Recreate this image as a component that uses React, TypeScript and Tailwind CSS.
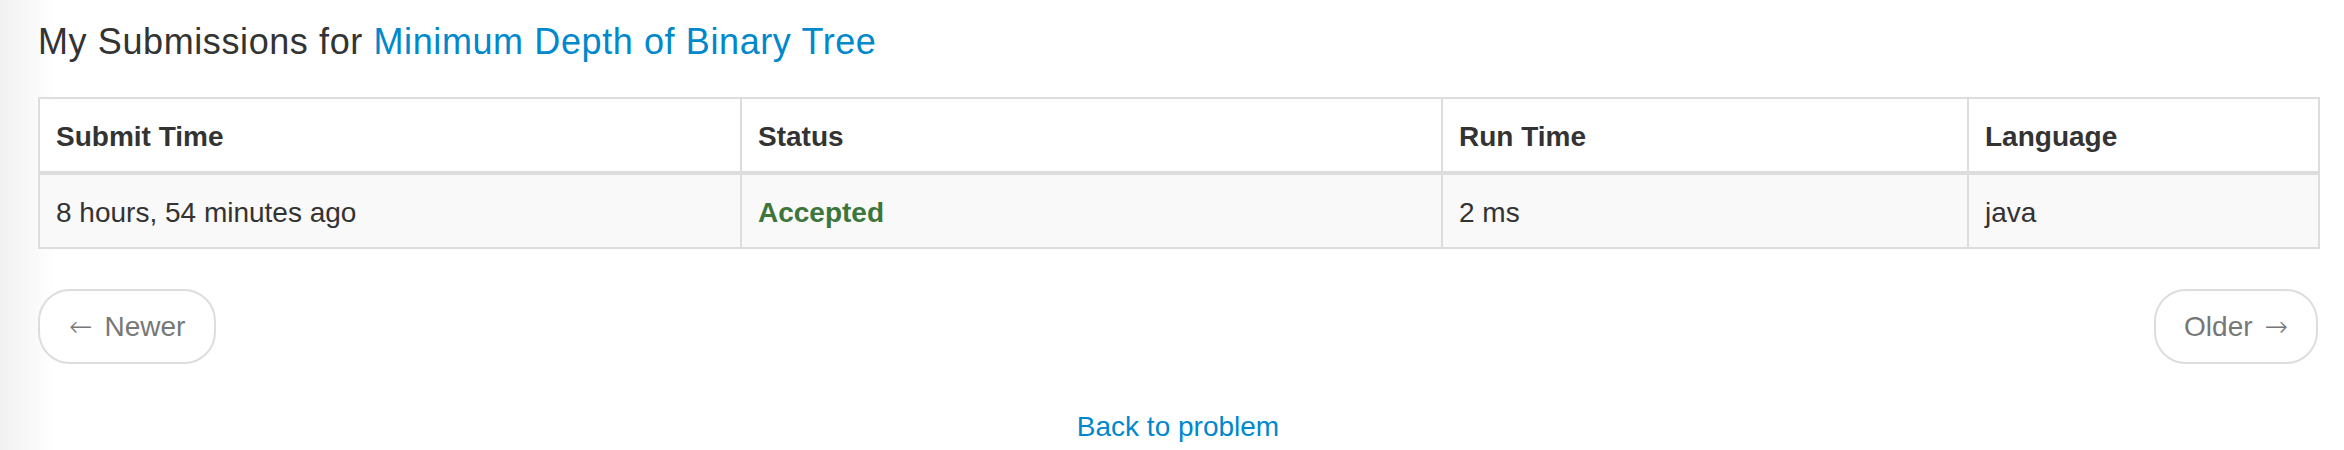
import React from "react";

type Submission = {
  time: string;
  status: string;
  runtime: string;
  lang: string;
};

const rows: Submission[] = [
  { time: "8 hours, 54 minutes ago", status: "Accepted", runtime: "2 ms", lang: "java" },
];

const arrowFont = { fontFamily: '"DejaVu Sans", sans-serif' };

export default function App() {
  return (
    <div
      className="min-h-[450px] pl-[38px] pr-[26px] text-[#333]"
      style={{ fontFamily: '"Liberation Sans", Arial, sans-serif', backgroundImage: "linear-gradient(to right, #f1f1f1 0px, #ffffff 56px)" }}
    >
      <h3 className="pt-[22px] text-[36px] leading-[40px] font-normal tracking-[0.6px]">
        My Submissions for{" "}
        <a href="#" className="text-[#0088cc]">
          Minimum Depth of Binary Tree
        </a>
      </h3>

      <table className="mt-[35px] w-[2280px] table-fixed border-collapse border-2 border-[#ddd] text-[28px] leading-[40px]">
        <colgroup>
          <col className="w-[702px]" />
          <col className="w-[701px]" />
          <col className="w-[526px]" />
          <col className="w-[351px]" />
        </colgroup>
        <thead>
          <tr className="bg-white">
            <th className="border-2 border-b-4 border-[#ddd] px-4 pt-[18px] pb-[14px] text-left font-bold">Submit Time</th>
            <th className="border-2 border-b-4 border-[#ddd] px-4 pt-[18px] pb-[14px] text-left font-bold">Status</th>
            <th className="border-2 border-b-4 border-[#ddd] px-4 pt-[18px] pb-[14px] text-left font-bold">Run Time</th>
            <th className="border-2 border-b-4 border-[#ddd] px-4 pt-[18px] pb-[14px] text-left font-bold">Language</th>
          </tr>
        </thead>
        <tbody>
          {rows.map((row) => (
            <tr key={row.time} className="bg-[#f9f9f9]">
              <td className="border-2 border-[#ddd] px-4 pt-[18px] pb-[14px]">{row.time}</td>
              <td className="border-2 border-[#ddd] px-4 pt-[18px] pb-[14px] font-bold text-[#3c763d]">{row.status}</td>
              <td className="border-2 border-[#ddd] px-4 pt-[18px] pb-[14px]">{row.runtime}</td>
              <td className="border-2 border-[#ddd] px-4 pt-[18px] pb-[14px]">{row.lang}</td>
            </tr>
          ))}
        </tbody>
      </table>

      <div className="mt-[40px] flex w-[2280px] justify-between">
        <a
          href="#"
          className="flex h-[75px] items-center gap-[12px] rounded-[32px] border-2 border-[#ddd] bg-white px-[29px] text-[28px] text-[#777]"
        >
          <span className="font-light" style={arrowFont}>←</span>
          <span>Newer</span>
        </a>
        <a
          href="#"
          className="flex h-[75px] items-center gap-[12px] rounded-[32px] border-2 border-[#ddd] bg-white px-[28px] text-[28px] text-[#777]"
        >
          <span>Older</span>
          <span className="font-light" style={arrowFont}>→</span>
        </a>
      </div>

      <div className="mt-[43px] w-[2280px] text-center text-[28px] leading-[40px]">
        <a href="#" className="text-[#0088cc]">
          Back to problem
        </a>
      </div>
    </div>
  );
}
